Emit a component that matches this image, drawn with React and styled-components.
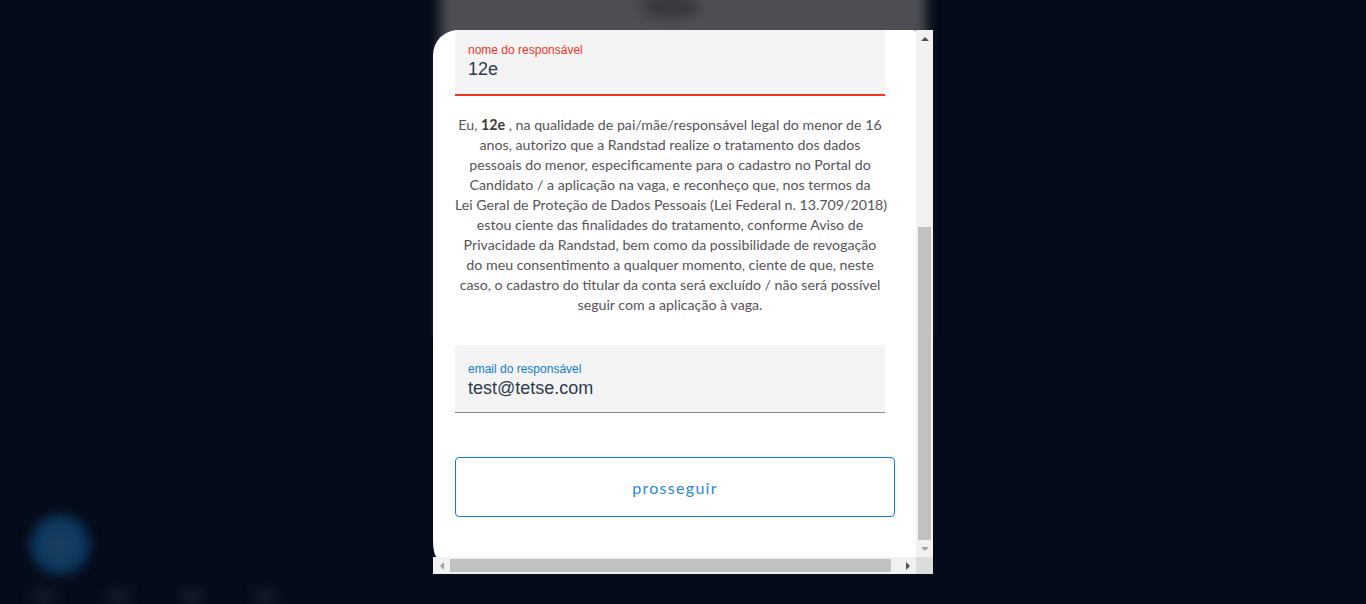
import React, { useLayoutEffect, useRef, useState } from 'react'
import styled, { createGlobalStyle, css } from 'styled-components'

const GlobalStyle = createGlobalStyle`
  html, body {
    margin: 0;
    padding: 0;
    background: #050b1a;
    font-family: 'Liberation Sans', Arial, sans-serif;
  }
`

const BAR = 17

const App = () => {
  const viewRef = useRef(null)
  const [bars, setBars] = useState({ vTop: 0, vSize: 0, hLeft: 0, hSize: 0 })

  // the dialog is shown scrolled down to its last part; the drawn
  // scrollbars follow the real scroll metrics of the viewport
  useLayoutEffect(() => {
    const el = viewRef.current
    if (!el) return
    el.scrollTop = el.scrollHeight - el.clientHeight
    const vTrack = el.clientHeight - BAR * 2
    const hTrack = el.clientWidth - BAR * 2
    setBars({
      vTop: (el.scrollTop / el.scrollHeight) * vTrack,
      vSize: (el.clientHeight / el.scrollHeight) * vTrack,
      hLeft: (el.scrollLeft / el.scrollWidth) * hTrack,
      hSize: (el.clientWidth / el.scrollWidth) * hTrack,
    })
  }, [])

  return (
    <Page>
      <GlobalStyle />
      <Backdrop aria-hidden="true">
        <BehindCard>
          <BehindBlob />
        </BehindCard>
        <ChatBubble />
        <BottomNav>
          <NavDot />
          <NavDot />
          <NavDot />
          <NavDot />
        </BottomNav>
      </Backdrop>

      <Overlay>
        <Dialog>
          <Viewport ref={viewRef}>
            <DialogContent>
              <Title>autorização do responsável</Title>
              <Intro>
                Como você tem menos de 16 anos, precisamos do
                <br />
                consentimento do seu pai, mãe ou responsável legal
                <br />
                para continuar com o cadastro.
              </Intro>
              <Field $gap="55px">
                <FieldLabel>data de nascimento do menor</FieldLabel>
                <FieldValue>01/01/2010</FieldValue>
              </Field>

              <Field $state="error" $gap="19px">
                <FieldLabel $state="error">nome do responsável</FieldLabel>
                <FieldValue>12e</FieldValue>
              </Field>

              <Consent>
                Eu, <strong>12e</strong> , na qualidade de pai/mãe/responsável legal do menor de 16
                <br />
                anos, autorizo que a Randstad realize o tratamento dos dados
                <br />
                pessoais do menor, especificamente para o cadastro no Portal do
                <br />
                Candidato / a aplicação na vaga, e reconheço que, nos termos da
                <br />
                Lei Geral de Proteção de Dados Pessoais (Lei Federal n. 13.709/2018)
                <br />
                estou ciente das finalidades do tratamento, conforme Aviso de
                <br />
                Privacidade da Randstad, bem como da possibilidade de revogação
                <br />
                do meu consentimento a qualquer momento, ciente de que, neste
                <br />
                caso, o cadastro do titular da conta será excluído / não será possível
                <br />
                seguir com a aplicação à vaga.
              </Consent>

              <Field $state="focus" $gap="44px">
                <FieldLabel $state="focus">email do responsável</FieldLabel>
                <FieldValue>test@tetse.com</FieldValue>
              </Field>

              <ProceedButton type="button">prosseguir</ProceedButton>
            </DialogContent>
          </Viewport>

          <VScrollbar>
            <ArrowButton $dir="up" />
            <VTrack>
              <Thumb $axis="v" style={{ marginTop: bars.vTop, height: bars.vSize }} />
            </VTrack>
            <ArrowButton $dir="down" $disabled />
          </VScrollbar>

          <HScrollbar>
            <ArrowButton $dir="left" $disabled />
            <HTrack>
              <Thumb $axis="h" style={{ marginLeft: bars.hLeft, width: bars.hSize }} />
            </HTrack>
            <ArrowButton $dir="right" />
          </HScrollbar>

          <Corner />
        </Dialog>
      </Overlay>
    </Page>
  )
}

export default App

const Page = styled.div`
  position: relative;
  width: 1366px;
  height: 604px;
  overflow: hidden;
  background: #050b1a;
`

const Backdrop = styled.div`
  position: absolute;
  inset: 0;
  filter: blur(6px);
`

const BehindCard = styled.div`
  position: absolute;
  left: 440px;
  top: -60px;
  width: 486px;
  height: 400px;
  background: #4d4e52;
`

const BehindBlob = styled.div`
  position: absolute;
  left: 200px;
  top: 55px;
  width: 60px;
  height: 24px;
  border-radius: 50%;
  background: #38393c;
`

const ChatBubble = styled.div`
  position: absolute;
  left: 30px;
  top: 515px;
  width: 60px;
  height: 60px;
  border-radius: 50%;
  background: radial-gradient(circle, #1d3f5e 0%, #0b3960 60%, #06284a 100%);
`

const BottomNav = styled.div`
  position: absolute;
  left: 32px;
  top: 588px;
  display: flex;
  gap: 50px;
`

const NavDot = styled.div`
  width: 24px;
  height: 16px;
  border-radius: 6px;
  background: #131929;
`

const Overlay = styled.div`
  position: absolute;
  inset: 0;
  display: flex;
  align-items: center;
  justify-content: center;
`

const Dialog = styled.div`
  width: 500px;
  height: 544px;
  display: grid;
  grid-template-columns: 1fr ${BAR}px;
  grid-template-rows: 1fr ${BAR}px;
`

const Viewport = styled.div`
  overflow: hidden;
  background: #fff;
  border-radius: 25px 3px 0 4px / 25px 2px 0 17px;
`

const VScrollbar = styled.div`
  display: flex;
  flex-direction: column;
  background: #f1f1f1;
`

const HScrollbar = styled.div`
  display: flex;
  background: #f1f1f1;
`

const VTrack = styled.div`
  flex: 1;
  display: flex;
  flex-direction: column;
`

const HTrack = styled.div`
  flex: 1;
  display: flex;
`

const Thumb = styled.div`
  box-sizing: border-box;
  background: #c1c1c1;
  ${({ $axis }) =>
    $axis === 'v'
      ? css`
          margin-left: 2px;
          margin-right: 2px;
        `
      : css`
          margin-top: 2px;
          margin-bottom: 2px;
        `}
`

const Corner = styled.div`
  background: #dcdcdc;
`

const arrowShapes = {
  up: (c) => css`
    border-left: 4px solid transparent;
    border-right: 4px solid transparent;
    border-bottom: 4px solid ${c};
  `,
  down: (c) => css`
    border-left: 4px solid transparent;
    border-right: 4px solid transparent;
    border-top: 4px solid ${c};
  `,
  left: (c) => css`
    border-top: 4px solid transparent;
    border-bottom: 4px solid transparent;
    border-right: 4px solid ${c};
  `,
  right: (c) => css`
    border-top: 4px solid transparent;
    border-bottom: 4px solid transparent;
    border-left: 4px solid ${c};
  `,
}

const ArrowButton = styled.div`
  flex: 0 0 ${BAR}px;
  width: ${BAR}px;
  height: ${BAR}px;
  display: flex;
  align-items: center;
  justify-content: center;

  &::before {
    content: '';
    width: 0;
    height: 0;
    ${({ $dir, $disabled }) => arrowShapes[$dir]($disabled ? '#a3a3a3' : '#505050')}
  }
`

const DialogContent = styled.div`
  box-sizing: border-box;
  width: 492px;
  padding: 40px 40px 40px 22px;
  display: flex;
  flex-direction: column;
  align-items: flex-start;
`

const Title = styled.h2`
  margin: 0 0 20px;
  width: 430px;
  text-align: center;
  font-family: 'Lato', sans-serif;
  font-weight: 400;
  font-size: 24px;
  line-height: 32px;
  color: #2175d9;
`

const Intro = styled.p`
  margin: 0 0 24px;
  width: 430px;
  text-align: center;
  white-space: nowrap;
  font-family: 'Lato', sans-serif;
  font-size: 14.2px;
  line-height: 20px;
  color: #57535a;
`

const fieldColors = {
  error: '#f5331f',
  focus: '#0f7ad9',
  idle: '#7a7a7a',
}

const Field = styled.div`
  box-sizing: border-box;
  width: 430px;
  height: ${({ $state }) => ($state === 'error' ? '69px' : '68px')};
  padding: ${({ $state }) => ($state === 'error' ? '16px' : '17px')} 13px 0;
  margin-bottom: ${({ $gap }) => $gap};
  background: #f4f4f4;
  border-radius: 4px 4px 0 0;
  border-bottom: ${({ $state }) =>
    $state === 'error' ? '2px solid #f5331f' : '1px solid #8c8c8c'};
`

const FieldLabel = styled.div`
  font-family: 'Liberation Sans', Arial, sans-serif;
  font-size: 12px;
  line-height: 14px;
  color: ${({ $state }) => fieldColors[$state] || fieldColors.idle};
`

const FieldValue = styled.div`
  margin-top: 1px;
  font-family: 'Liberation Sans', Arial, sans-serif;
  font-size: 18px;
  line-height: 22px;
  color: #2e3a4e;
`

const Consent = styled.p`
  margin: 0 0 30px;
  width: 430px;
  text-align: center;
  white-space: nowrap;
  font-family: 'Lato', sans-serif;
  font-size: 14.2px;
  line-height: 20px;
  color: #57535a;

  strong {
    font-weight: 700;
    color: #3a3a3a;
  }
`

const ProceedButton = styled.button`
  flex: 0 0 60px;
  width: 440px;
  height: 60px;
  border: 1px solid #0f7ae5;
  border-radius: 4px;
  background: #fff;
  font-family: 'Lato', sans-serif;
  font-size: 16px;
  letter-spacing: 1.3px;
  color: #2b86dd;
  cursor: pointer;
`
